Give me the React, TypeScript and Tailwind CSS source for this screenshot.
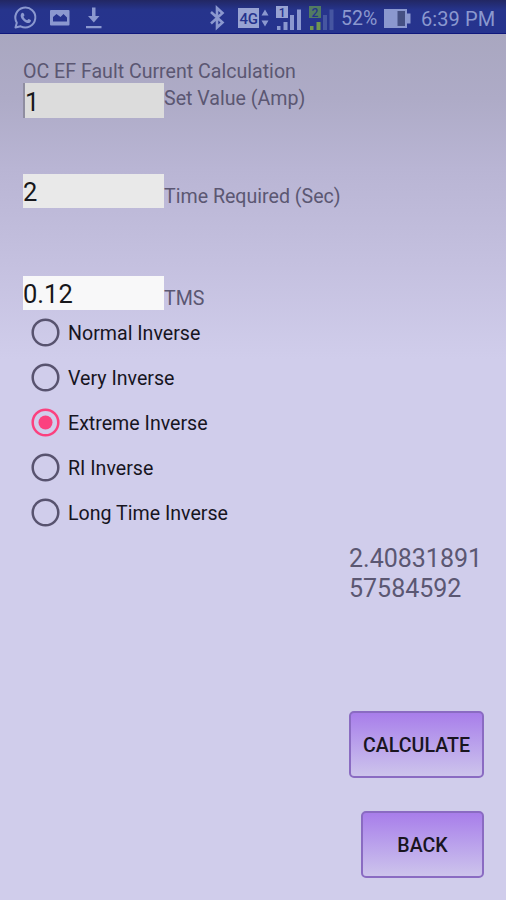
import { useState } from "react";

const CURVES = ["Normal Inverse", "Very Inverse", "Extreme Inverse", "RI Inverse", "Long Time Inverse"];

function StatusBar() {
  return (
    <header className="flex h-[34px] items-center border-b border-[#10187c] bg-[linear-gradient(#222763,#26348c_30%,#26338e)] text-[#8b98cf]">
      <svg className="h-[34px] w-[110px] shrink-0" viewBox="0 0 110 34" fill="none">
        <path d="M15.500 27.500l1.300-4.800a10 10 0 1 1 3.800 3.600z" stroke="currentColor" strokeWidth="2" strokeLinejoin="round" />
        <path
          d="M21.500 13.200c.8-.9 1.800-.6 2.200.3l.7 1.600c.2.5-.7 1.300-.9 1.700.8 1.700 2 2.800 3.700 3.500.4-.2 1.100-1.400 1.600-1.200l1.900 1c.7.4.1 2-1 2.600-1.600.9-4.100 0-6.200-2-2.400-2.300-3.800-5.200-2-7.500z"
          fill="currentColor"
        />
        <rect x="50" y="10" width="19.500" height="15.500" rx="1" fill="currentColor" />
        <path d="M53 21.500v-4.500l3.500-3 4 3 3-3 3.500 3.500v4z" fill="#26338e" />
        <path d="M92 7.500h3.500V16h4l-5.700 6.500L88 16h4zM86 26h15.500v2.300H86z" fill="currentColor" />
      </svg>
      <div className="flex-1" />
      <svg className="h-[34px] w-[134px] shrink-0" viewBox="206 0 134 34" fill="none">
        <path d="M211 12l11.500 10.500-5.500 5V8l5.500 5L211 23.500" stroke="currentColor" strokeWidth="2.600" />
        <rect x="238" y="8" width="21" height="20" fill="#98a3d3" />
        <text x="239.500" y="24" fontFamily="Roboto, sans-serif" fontSize="15" fontWeight="500" fill="#26338e" textLength="18.500">
          4G
        </text>
        <path d="M261.500 15.500l3.500-6 3.500 6zM261.500 20.500l3.500 6 3.500-6z" fill="currentColor" />
        <rect x="276" y="6" width="12" height="12" fill="#98a3d3" />
        <path d="M277 26h3.500v4H277zM283.500 22h4v8h-4zM290 15h4v15h-4zM297 9.500h4V30h-4z" fill="currentColor" />
        <text x="278.800" y="16.500" fontFamily="Roboto, sans-serif" fontSize="12" fontWeight="500" fill="#26338e">
          1
        </text>
        <rect x="309" y="6" width="12" height="12" fill="#527b61" />
        <path d="M310 26h3.500v4H310zM316.500 22h4v8h-4z" fill="#719650" />
        <path d="M323 15h4v15h-4zM329.500 9.500h4V30h-4z" fill="#4656a1" />
        <text x="311.500" y="16.500" fontFamily="Roboto, sans-serif" fontSize="12" fontWeight="500" fill="#26338e">
          2
        </text>
      </svg>
      <span className="w-[43px] whitespace-nowrap pl-px pt-[5px] text-[19.500px] leading-none">52%</span>
      <svg className="h-[34px] w-[38px] shrink-0" viewBox="383 0 38 34">
        <path d="M384 9h23v4.500h3.500v10H407V28h-23z" fill="currentColor" />
        <path d="M397.500 11h7.500v15h-7.500z" fill="#455083" />
      </svg>
      <span className="w-[85px] whitespace-nowrap pt-1 text-[20px] leading-none tracking-[0.1px]">6:39 PM</span>
    </header>
  );
}

export default function App() {
  const [curve, setCurve] = useState("Extreme Inverse");

  return (
    <div className="flex h-[900px] w-[506px] flex-col overflow-hidden bg-[#d0cdeb] font-['Roboto',sans-serif]">
      <StatusBar />
      <main className="flex flex-1 flex-col bg-[linear-gradient(#a9a7c0_0px,#aeabc7_65px,#b9b5d4_135px,#c5c1e0_235px,#d0cdeb_325px)] pl-[23px] pr-[22px] text-[#5b5772]">
        <h1 className="h-[49px] pt-[26px] text-[19.600px] leading-[24px]">OC EF Fault Current Calculation</h1>

        <div className="flex h-[91px] items-start">
          <input defaultValue="1" className="h-[35px] w-[141px] border-l-2 border-[#8f8da0] bg-[#dcdcdc] pt-[3px] text-[25.500px] text-[#17171b] outline-none" />
          <label className="pt-[4px] text-[19.600px] leading-[24px]">Set Value (Amp)</label>
        </div>
        <div className="flex h-[102px] items-start">
          <input defaultValue="2" className="h-[34px] w-[141px] bg-[#e9e9e9] pt-[3px] text-[25.500px] text-[#17171b] outline-none" />
          <label className="pt-[11px] text-[19.600px] leading-[24px]">Time Required (Sec)</label>
        </div>
        <div className="flex h-[34px] items-start">
          <input defaultValue="0.12" className="h-[34px] w-[141px] bg-[#f8f8f9] pt-[3px] text-[25.500px] text-[#17171b] outline-none" />
          <label className="pt-[11px] text-[19.600px] leading-[24px]">TMS</label>
        </div>

        <div className="flex flex-col pl-2">
          {CURVES.map((name) => (
            <button key={name} onClick={() => setCurve(name)} className="flex h-[45px] items-center gap-[8px] text-left">
              <svg className="h-[29px] w-[29px]" viewBox="0 0 29 29" fill="none">
                <circle cx="14.500" cy="14.500" r="12.800" strokeWidth="2.500" stroke={curve === name ? "#fb417f" : "#58536f"} />
                {curve === name && <circle cx="14.500" cy="14.500" r="7" fill="#fb417f" />}
              </svg>
              <span className="pt-[2px] text-[19.600px] leading-[24px] text-[#17151f]">{name}</span>
            </button>
          ))}
        </div>

        <output className="mt-[9px] h-[167px] w-[135px] self-end break-all text-[25px] leading-[30px]">2.4083189157584592</output>

        <button className="h-[67px] w-[135px] self-end rounded-[5px] border-2 border-[#8a6bc2] bg-linear-to-b from-[#a77bea] to-[#cec6eb] bg-origin-border pt-[2px] text-[19.600px] font-medium text-[#19151f]">
          CALCULATE
        </button>
        <button className="mt-[33px] h-[67px] w-[123px] self-end rounded-[5px] border-2 border-[#8a6bc2] bg-linear-to-b from-[#a77bea] to-[#cec6eb] bg-origin-border pt-[2px] text-[19.600px] font-medium text-[#19151f]">
          BACK
        </button>
      </main>
    </div>
  );
}
